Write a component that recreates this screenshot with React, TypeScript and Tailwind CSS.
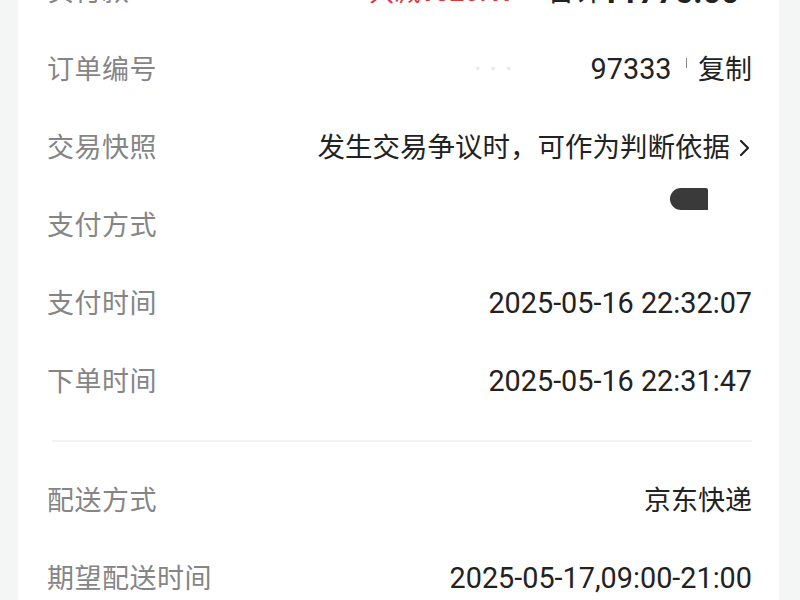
import React from "react";

const cjk = { fontFamily: 'Roboto, "Noto Sans CJK SC", sans-serif' };

function Row({ label, children }: { label: string; children?: React.ReactNode }) {
  return (
    <div className="h-[78px] flex items-center justify-between">
      <span className="text-[27px] text-[#858585] tracking-[0.5px]">{label}</span>
      <div className="flex items-center text-[28.8px] text-[#222]">{children}</div>
    </div>
  );
}

export default function App() {
  return (
    <div className="w-[800px] h-[600px] overflow-hidden bg-[#f4f5f5]" style={cjk}>
      <div className="ml-[18px] w-[761px] min-h-[660px] bg-white pl-[29px] pr-[27px]">
        <div className="-mt-[47px]">
          <Row label="实付款">
            <span className="text-[#e2323a] text-[26px]">共减</span>
            <span className="text-[#e2323a] font-bold text-[26px]">¥520.17</span>
            <span className="ml-[30px] text-[28px]">合计</span>
            <span className="font-bold text-[32px]">¥1775.00</span>
            <span className="ml-1">›</span>
          </Row>
          <Row label="订单编号">
            <span className="text-[#e6e6e6] mr-[70px] tracking-[8px]">···</span>
            <span>97333</span>
            <span className="ml-[14px] mr-[11px] mb-[14px] w-[1.5px] h-[10px] bg-[#888]" />
            <span className="text-[27px]">复制</span>
          </Row>
          <Row label="交易快照">
            <span className="text-[27.5px]">发生交易争议时，可作为判断依据</span>
            <svg className="ml-[8px]" width="14" height="20" viewBox="0 0 14 20" fill="none">
              <path d="M3 3l7 7-7 7" stroke="#222" strokeWidth="2.2" strokeLinecap="round" strokeLinejoin="round" />
            </svg>
          </Row>
          <Row label="支付方式">
            <span className="mb-[54px] mr-[44px] w-[38px] h-[22px] bg-[#3a3a3a] rounded-l-[11px] rounded-tr-[2px]" />
          </Row>
          <Row label="支付时间">
            <span>2025-05-16 22:32:07</span>
          </Row>
          <Row label="下单时间">
            <span>2025-05-16 22:31:47</span>
          </Row>
          <div className="mt-[19px] mb-[20px] ml-[5px] h-[2px] bg-[#f2f2f2]" />
          <Row label="配送方式">
            <span className="text-[27px]">京东快递</span>
          </Row>
          <Row label="期望配送时间">
            <span>2025-05-17,09:00-21:00</span>
          </Row>
        </div>
      </div>
    </div>
  );
}
